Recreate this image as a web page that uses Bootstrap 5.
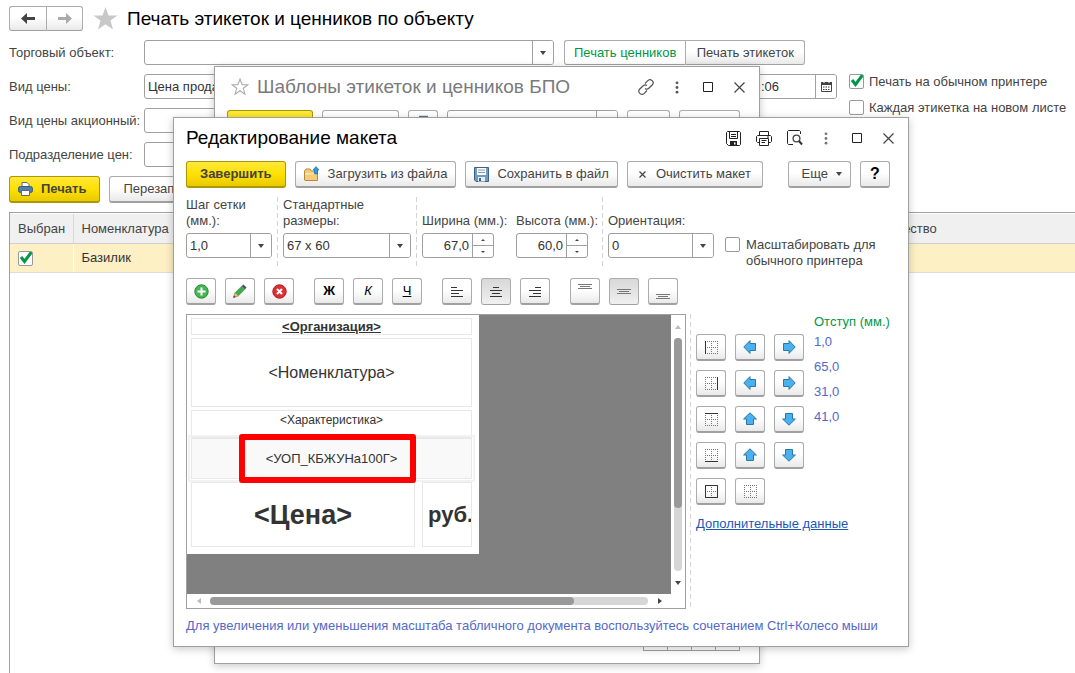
<!DOCTYPE html>
<html lang="ru">
<head>
<meta charset="utf-8">
<meta name="viewport" content="width=device-width, initial-scale=1">
<title>Печать этикеток и ценников по объекту</title>
<link href="https://cdn.jsdelivr.net/npm/bootstrap@5.3.0/dist/css/bootstrap.min.css" rel="stylesheet">
<style>
  :root { --edge:#a0a0a0; --ink:#444; --blue:#5468c8; --green:#009646; }
  html, body { height:100%; }
  body { font-family:"Liberation Sans", Arial, sans-serif; font-size:13px; line-height:16px; color:var(--ink); background:#fff; }
  svg { display:block; flex:none; }
  button, input { font:inherit; color:inherit; }
  .desk { position:relative; min-height:100vh; overflow:hidden; }
  .page-body { padding:6px 0 0 9px; gap:9px; min-height:100vh; }
  .page-title { font-size:19px; line-height:24px; color:#000; font-weight:400; margin:0; }
  .cap { width:135px; flex:none; }
  .gap-9 { gap:9px; } .gap-10 { gap:10px; } .gap-20 { gap:20px; }

  .ctl { height:27px; padding:0 13px; border:1px solid #acacac; border-bottom:2px solid #a0a0a0; border-radius:3px;
         background:linear-gradient(#fff 45%,#e9e9e9); color:var(--ink); display:flex; align-items:center; justify-content:center; white-space:nowrap; }
  .ctl-main { background:linear-gradient(#ffe93e,#ffe000 50%,#e8ca00); border-color:#ab9700; font-weight:700; }
  .ctl-sq { width:30px; padding:0; flex:none; }
  .ctl-on { background:linear-gradient(#d8d8d8,#f0f0f0); border-width:1px; }
  .ctl-low { height:25px; padding:0 9px; }
  .ctl-nav { width:37px; padding:0; }
  .ctl-wipe { padding:0 11px; }
  .pair .ctl { border-bottom-width:1px; }
  .pair .ctl:first-child { border-radius:3px 0 0 3px; border-right:0; }
  .pair .ctl:last-child { border-radius:0 3px 3px 0; }
  .pair .picked { background:#fff; color:var(--green); }
  .wide { min-width:120px; }

  .fld { display:flex; height:25px; border:1px solid var(--edge); border-radius:3px; background:#fff; overflow:hidden; flex:none; }
  .fld input { border:0; outline:0; padding:0 3px; min-width:0; flex:1; color:#333; background:none; }
  .fld > button { width:21px; flex:none; border:0; border-left:1px solid var(--edge); background:#fff; padding:0; display:flex; align-items:center; justify-content:center; }
  .w-kind { width:410px; } .w-date { width:80px; margin-left:203px; }
  .w-step { width:86px; } .w-size { width:128px; } .w-num { width:72px; } .w-turn { width:106px; }
  .spin { width:21px; flex:none; border-left:1px solid var(--edge); display:flex; flex-direction:column; }
  .spin button { flex:1; border:0; background:none; padding:0; display:flex; align-items:center; justify-content:center; }
  .spin button + button { border-top:1px solid var(--edge); }

  .tick { appearance:none; width:15px; height:15px; margin:0; border:1px solid #999; border-radius:2px; background:#fff; flex:none; }
  .tick:checked { background:#fff url("data:image/svg+xml,%3Csvg xmlns='http://www.w3.org/2000/svg' viewBox='0 0 15 15'%3E%3Cpath d='M3 6 6.500 10.500 13.500 1' fill='none' stroke='%23009646' stroke-width='3'/%3E%3C/svg%3E") center/15px no-repeat; }
  .tick-line { display:flex; gap:5px; margin-bottom:10px; }

  .goods { border-left:1px solid var(--edge); border-top:1px solid var(--edge); flex:1; }
  .goods table { width:100%; table-layout:fixed; border-collapse:collapse; }
  .goods th { height:30px; font-weight:400; background:#f0f0f0; border-bottom:1px solid #cfcfcf; border-top:1px solid #fff; padding:0 8px; }
  .goods td { height:29px; background:#fdf0c5; border-bottom:1px solid #ddd; border-top:1px solid #fff; padding:0 8px; color:#333; }
  .goods th + th { border-left:1px solid #d8d8d8; } .goods td + td { border-left:1px solid #fff; }
  .goods .c-pick { width:63px; } .goods .c-name { width:790px; }

  .win { position:absolute; background:#fff; border:1px solid var(--edge); box-shadow:0 2px 8px rgba(0,0,0,.22); }
  .win-list { left:214px; top:66px; width:546px; padding:8px 10px 12px 12px; }
  .win-edit { left:173px; top:117px; width:736px; padding:8px 10px 12px 12px; }
  .win-head { display:flex; align-items:center; margin-bottom:11px; }
  .win-tools { display:flex; gap:11px; }
  .win-title { font-size:19px; line-height:24px; margin:0; font-weight:400; color:#000; }
  .win-list .win-title { color:#7a7a7a; }
  .win-btn { border:0; background:none; padding:0; width:20px; height:20px; display:flex; align-items:center; justify-content:center; flex:none; }
  .b-pick { width:86px; } .b-new { width:77px; } .b-find { width:171px; } .b-clear { width:43px; } .b-more { width:61px; }
  .list-space { height:489px; }
  .page-keys { padding-right:9px; }
  .page-keys button { width:25px; height:25px; background:#fff; border:1px solid var(--edge); margin-left:-1px; padding:0; }

  .dash-l { width:1px; margin:0 5px; background:repeating-linear-gradient(#d4d4d4 0 5px,transparent 5px 8px); align-self:stretch; flex:none; }
  .dash-sheet { margin-left:4px; }
  .params { min-height:72px; margin:9px 0; }
  .params .cap-top { display:block; margin-bottom:4px; white-space:nowrap; }
  .col-wd { width:94px; } .col-ht { width:81px; }
  .scale-opt { display:flex; gap:6px; margin-left:11px; }

  .work { margin-top:9px; }
  .sheet { width:500px; border:1px solid var(--edge); display:grid; grid-template-columns:1fr 14px; grid-template-rows:279px 14px; flex:none; }
  .canvas { background:#808080; }
  .paper { background:#fff; width:292px; padding:3px 7px 4px 4px; position:relative; color:#333; }
  .slot { border:1px solid #e8e8e8; display:flex; align-items:center; justify-content:center; margin-bottom:3px; white-space:nowrap; overflow:hidden; }
  .s-org { height:17px; font-weight:700; text-decoration:underline; }
  .s-name { height:69px; font-size:16px; }
  .s-feat { height:28px; margin-bottom:0; font-size:12px; padding-bottom:9px; }
  .s-kbju { height:41px; background:#f9f9f9; outline:2px solid #f2f2f2; outline-offset:1px; }
  .s-price { height:65px; width:224px; font-size:27px; font-weight:700; line-height:32px; }
  .s-rub { height:65px; width:50px; font-size:22px; font-weight:700; justify-content:flex-start; padding-left:5px; line-height:32px; }
  .frame-mark { position:absolute; left:52px; top:119px; width:177px; height:49px; border:6px solid #f00; border-radius:3px; }
  .bar { display:flex; align-items:center; }
  .bar-y { flex-direction:column; }
  .bar button { border:0; background:none; padding:0; flex:none; width:23px; height:14px; display:flex; align-items:center; justify-content:center; }
  .bar-y button { width:14px; height:23px; }
  .rail { flex:1; background:#d6d6d6; border-radius:4px; }
  .bar-y .rail { width:8px; } .bar-x .rail { height:8px; }
  .grip { background:#999; border-radius:4px; }
  .bar-y .grip { height:73%; } .bar-x .grip { height:8px; width:83%; }

  .moves { display:grid; grid-template-columns:repeat(3,30px); gap:9px; padding-top:20px; }
  .insets { color:var(--blue); }
  .insets li { margin-bottom:9px; }
  .green { color:var(--green); }
  .more { color:#1a56b8; text-decoration:underline; display:inline-block; margin-top:11px; }
  .hint { color:var(--blue); margin:9px 0 0; }
</style>
</head>
<body>
<svg class="d-none" aria-hidden="true">
  <symbol id="dn" viewBox="0 0 6 4"><path d="M0 0H6L3 4z" fill="#444"/></symbol>
  <symbol id="dots" viewBox="0 0 4 14"><circle cx="2" cy="2" r="1.500"/><circle cx="2" cy="7" r="1.500"/><circle cx="2" cy="12" r="1.500"/></symbol>
  <symbol id="box" viewBox="0 0 10 10"><path d="M.5.5H9.500V9.500H.5z" fill="none" stroke="#222"/></symbol>
  <symbol id="x" viewBox="0 0 11 11"><path d="M.5.5 10.500 10.500M10.500.5.5 10.500" stroke="#444" stroke-width="1.200"/></symbol>
  <symbol id="arrow" viewBox="0 0 14 14"><path d="M.8 7 7 .6V3.500H12.500V10.500H7V13.400z" fill="#4ab0ee" stroke="#2b78a8"/></symbol>
  <symbol id="cells" viewBox="0 0 13 13"><path d="M.5 0V13M12.500 0V13M0 .5H13M0 12.500H13M6.500 0V13M0 6.500H13" fill="none" stroke="#777" stroke-dasharray="1 1"/></symbol>
</svg>

<div class="desk">
<main class="page-body d-flex flex-column">
  <header class="d-flex align-items-center">
    <div class="d-flex pair">
      <button class="ctl ctl-low ctl-nav" aria-label="Назад"><svg width="14" height="11" viewBox="0 0 14 11"><path d="M6 0V4H14V7H6V11L0 5.500z" fill="#444"/></svg></button>
      <button class="ctl ctl-low ctl-nav" aria-label="Вперед"><svg width="14" height="11" viewBox="0 0 14 11"><path d="M8 0V4H0V7H8V11L14 5.500z" fill="#aaa"/></svg></button>
    </div>
    <svg class="ms-2 me-2" width="28" height="24" viewBox="0 0 28 24"><path d="M14.500 0 17.500 8.500H26.500L19.500 13.500 22 22.500 14.500 17.200 7 22.500 9.500 13.500 2.500 8.500H11.500z" fill="#c8c8c8"/></svg>
    <h1 class="page-title">Печать этикеток и ценников по объекту</h1>
  </header>

  <div class="d-flex align-items-center">
    <label class="cap" for="obj">Торговый объект:</label>
    <div class="d-flex gap-10">
      <div class="fld w-kind"><input id="obj" type="text"><button aria-label="Выбрать объект"><svg width="6" height="4"><use href="#dn"/></svg></button></div>
      <div class="d-flex pair">
        <button class="ctl ctl-low wide picked">Печать ценников</button>
        <button class="ctl ctl-low wide">Печать этикеток</button>
      </div>
    </div>
  </div>

  <div class="d-flex">
    <div class="d-flex flex-column gap-9">
      <div class="d-flex align-items-center"><label class="cap" for="kind">Вид цены:</label><div class="fld w-kind"><input id="kind" type="text" value="Цена продажи"></div></div>
      <div class="d-flex align-items-center"><label class="cap" for="promo">Вид цены акционный:</label><div class="fld w-kind"><input id="promo" type="text"></div></div>
      <div class="d-flex align-items-center"><label class="cap" for="dept">Подразделение цен:</label><div class="fld w-kind"><input id="dept" type="text"></div></div>
    </div>
    <div class="fld w-date"><input type="text" value=":06" aria-label="Время"><button aria-label="Календарь"><svg width="11" height="11" viewBox="0 0 11 11"><path d="M.5 1.500H10.500V10.500H.5z" fill="none" stroke="#444"/><path d="M0 1H11V4H0z" fill="#444"/><path d="M3 0V2M8 0V2" stroke="#fff"/><path d="M2 6H9.500M2 8.500H9.500" stroke="#444" stroke-dasharray="1.500 1"/></svg></button></div>
    <div class="ms-2 ps-1">
      <label class="tick-line"><input class="tick" type="checkbox" checked>Печать на обычном принтере</label>
      <label class="tick-line"><input class="tick" type="checkbox">Каждая этикетка на новом листе</label>
    </div>
  </div>

  <div class="d-flex gap-9">
    <button class="ctl ctl-main ps-2"><svg class="me-2" width="15" height="14" viewBox="0 0 15 14"><path d="M4 5V.5H9L11 2.500V5" fill="#fff" stroke="#667"/><rect x=".5" y="4.500" width="14" height="6" rx="2" fill="#4d7fae" stroke="#345b80"/><path d="M3.500 8.500H11.500V13.500H3.500z" fill="#fff" stroke="#667"/></svg>Печать</button>
    <button class="ctl">Перезаполнить</button>
  </div>

  <div class="goods">
    <table>
      <thead><tr><th class="c-pick">Выбран</th><th class="c-name">Номенклатура</th><th class="border-start-0 ps-1">Количество</th></tr></thead>
      <tbody><tr><td><input class="tick d-block" type="checkbox" checked aria-label="Выбран"></td><td>Базилик</td><td></td></tr></tbody>
    </table>
  </div>
</main>

<section class="win win-list" aria-label="Шаблоны">
  <div class="win-head">
    <svg class="ms-1 me-2" width="18" height="18" viewBox="0 0 17 17"><path d="M8.500 1 10.500 6.300H16L11.600 9.700 13.200 15.300 8.500 12 3.800 15.300 5.400 9.700 1 6.300H6.500z" fill="none" stroke="#aaa"/></svg>
    <h2 class="win-title me-auto">Шаблоны этикеток и ценников БПО</h2>
    <div class="win-tools">
      <button class="win-btn" aria-label="Ссылка"><svg width="16" height="16" viewBox="0 0 16 16"><g fill="none" stroke="#555" stroke-width="1.200"><path d="M7 4.500 9.800 1.700A2.900 2.900 0 0 1 14.200 6L10.800 9.300A2.900 2.900 0 0 1 7 9.500"/><path d="M9 11.500 6.200 14.300A2.900 2.900 0 0 1 1.800 10L5.200 6.700A2.900 2.900 0 0 1 9 6.500"/></g></svg></button>
      <button class="win-btn" aria-label="Меню"><svg width="4" height="13" fill="#555"><use href="#dots"/></svg></button>
      <button class="win-btn" aria-label="Развернуть"><svg width="10" height="10"><use href="#box"/></svg></button>
      <button class="win-btn" aria-label="Закрыть"><svg width="11" height="11"><use href="#x"/></svg></button>
    </div>
  </div>
  <div class="d-flex gap-9">
    <button class="ctl ctl-main b-pick" aria-label="Выбрать"></button>
    <button class="ctl b-new" aria-label="Создать"></button>
    <button class="ctl ctl-sq" aria-label="Копировать"><svg width="9" height="16" viewBox="0 0 10 16"><path d="M0 0H10V16H0z" fill="#5b7390"/></svg></button>
    <div class="fld b-find"><input type="text" aria-label="Поиск"><button aria-label="Найти"></button></div>
    <button class="ctl b-clear" aria-label="Очистить"></button>
    <button class="ctl b-more" aria-label="Еще"></button>
  </div>
  <div class="list-space"></div>
  <div class="d-flex justify-content-end page-keys"><button aria-label="В начало"></button><button aria-label="Вверх"></button><button aria-label="Вниз"></button><button aria-label="В конец"></button></div>
</section>

<section class="win win-edit" aria-label="Редактирование макета">
  <div class="win-head">
    <h2 class="win-title me-auto">Редактирование макета</h2>
    <div class="win-tools">
      <button class="win-btn" aria-label="Сохранить"><svg width="15" height="15" viewBox="0 0 15 15"><path d="M.5 1.500L1.500.5H13.500L14.500 1.500V13.500L13.500 14.500H2.500L.5 12.500zM3.500 1V7.500H11.500V1M5 3.500H10M5 5.500H10" fill="none" stroke="#222"/><path d="M4 10H11V14.500H4z" fill="#222"/><path d="M8 11.500H9.500V13.500H8z" fill="#fff"/></svg></button>
      <button class="win-btn" aria-label="Печать"><svg width="16" height="15" viewBox="0 0 16 15"><path d="M3.500 4V.5H12.500V4M3 11.500H1.500L.5 10.500V5.500L1.500 4.500H14.500L15.500 5.500V10.500L14.500 11.500H13M3.500 7.500H12.500V14.500H3.500zM5.500 9.500H10.500M5.500 11.500H9M11 6H13" fill="none" stroke="#222"/></svg></button>
      <button class="win-btn" aria-label="Просмотр"><svg width="16" height="16" viewBox="0 0 16 16"><path d="M13.500 4V1.500L12.500.5H1.500L.5 1.500V13.500L1.500 14.500H6" fill="none" stroke="#222"/><circle cx="9.500" cy="8.500" r="3.400" fill="none" stroke="#444" stroke-width="1.300"/><path d="M12 11 15 14.500" stroke="#333" stroke-width="2"/></svg></button>
      <button class="win-btn" aria-label="Меню"><svg width="4" height="13" fill="#777"><use href="#dots"/></svg></button>
      <button class="win-btn" aria-label="Развернуть"><svg width="10" height="10"><use href="#box"/></svg></button>
      <button class="win-btn" aria-label="Закрыть"><svg width="11" height="11"><use href="#x"/></svg></button>
    </div>
  </div>

  <div class="d-flex gap-9 page-keys-none pe-2">
    <button class="ctl ctl-main">Завершить</button>
    <button class="ctl px-2"><svg class="me-2" width="16" height="16" viewBox="0 0 16 16"><path d="M.5 14V5L2 3H6L7.500 5H13.500V14.500H1z" fill="#f5cd78" stroke="#b98a35"/><path d="M1 8H13" stroke="#fff0c0"/><path d="M10.500 8V4H9L12 .5 15 4H13.500V8z" fill="#2f9be0" stroke="#1c6faa" stroke-width=".7"/></svg>Загрузить из файла</button>
    <button class="ctl px-2"><svg class="me-2" width="15" height="15" viewBox="0 0 15 15"><path d="M.5.5H14.500V14.500H2L.5 13z" fill="#6f9cc6" stroke="#3c6288"/><path d="M3 1H12V8H3z" fill="#fff"/><path d="M4 3H11M4 5.500H11" stroke="#89a"/><path d="M4 10H11V14.500H4z" fill="#e6edf5"/><path d="M5 11H7V14H5z" fill="#3c6288"/></svg>Сохранить в файл</button>
    <button class="ctl ctl-wipe gap-10"><svg width="7" height="7" viewBox="0 0 7 7"><path d="M.5.5 6.500 6.500M6.500.5.5 6.500" stroke="#444" stroke-width="1.200"/></svg>Очистить макет</button>
    <button class="ctl ms-auto pe-2">Еще <svg class="ms-2" width="6" height="4"><use href="#dn"/></svg></button>
    <button class="ctl ctl-sq fw-bold text-black fs-6">?</button>
  </div>

  <div class="d-flex params">
    <div class="w-step"><label class="cap-top" for="step">Шаг сетки<br>(мм.):</label><div class="fld"><input id="step" value="1,0"><button aria-label="Выбрать шаг"><svg width="6" height="4"><use href="#dn"/></svg></button></div></div>
    <div class="dash-l"></div>
    <div class="w-size"><label class="cap-top" for="size">Стандартные<br>размеры:</label><div class="fld"><input id="size" value="67 x 60"><button aria-label="Выбрать размер"><svg width="6" height="4"><use href="#dn"/></svg></button></div></div>
    <div class="dash-l"></div>
    <div class="pt-3 col-wd"><label class="cap-top" for="wd">Ширина (мм.):</label><div class="fld w-num"><input id="wd" class="text-end" value="67,0"><span class="spin"><button aria-label="Больше"><svg width="4" height="2"><path d="M2 0 4 2H0z" fill="#444"/></svg></button><button aria-label="Меньше"><svg width="4" height="2"><path d="M0 0H4L2 2z" fill="#444"/></svg></button></span></div></div>
    <div class="pt-3 col-ht"><label class="cap-top" for="ht">Высота (мм.):</label><div class="fld w-num"><input id="ht" class="text-end" value="60,0"><span class="spin"><button aria-label="Больше"><svg width="4" height="2"><path d="M2 0 4 2H0z" fill="#444"/></svg></button><button aria-label="Меньше"><svg width="4" height="2"><path d="M0 0H4L2 2z" fill="#444"/></svg></button></span></div></div>
    <div class="dash-l"></div>
    <div class="w-turn pt-3"><label class="cap-top" for="turn">Ориентация:</label><div class="fld"><input id="turn" value="0"><button aria-label="Выбрать ориентацию"><svg width="6" height="4"><use href="#dn"/></svg></button></div></div>
    <label class="scale-opt align-self-end"><input class="tick" type="checkbox"><span>Масштабировать для<br>обычного принтера</span></label>
  </div>

  <div class="d-flex gap-20">
    <div class="d-flex gap-9">
      <button class="ctl ctl-sq" aria-label="Добавить"><svg width="15" height="15" viewBox="0 0 15 15"><circle cx="7.500" cy="7.500" r="6.700" fill="#44b652" stroke="#278b36"/><path d="M7.500 3.500V11.500M3.500 7.500H11.500" stroke="#fff" stroke-width="2"/></svg></button>
      <button class="ctl ctl-sq" aria-label="Изменить"><svg width="14" height="14" viewBox="0 0 14 14"><path d="M.5 13.500 2 8.500 5.500 12z" fill="#f3c277" stroke="#8a6a3a" stroke-width=".6"/><path d="M2 8.500 8.500 2 12 5.500 5.500 12z" fill="#43a84c"/><path d="M8.500 2 10.500 .5 13.500 3.500 12 5.500z" fill="#4a5568"/><path d="M.3 13.700 1 11.500 2.500 13z" fill="#333"/></svg></button>
      <button class="ctl ctl-sq" aria-label="Удалить"><svg width="15" height="15" viewBox="0 0 15 15"><circle cx="7.500" cy="7.500" r="6.700" fill="#dd3036" stroke="#b01a22"/><path d="M5 5 10 10M10 5 5 10" stroke="#fff" stroke-width="2"/></svg></button>
    </div>
    <div class="d-flex gap-9">
      <button class="ctl ctl-sq fw-bold text-black">Ж</button>
      <button class="ctl ctl-sq fst-italic text-black">К</button>
      <button class="ctl ctl-sq text-decoration-underline text-black">Ч</button>
    </div>
    <div class="d-flex gap-9">
      <button class="ctl ctl-sq" aria-label="По левому краю"><svg width="12" height="11" viewBox="0 0 12 11"><path d="M0 1.500H6M0 4.500H12M0 7.500H8M0 10.500H12" stroke="#333"/></svg></button>
      <button class="ctl ctl-sq ctl-on" aria-label="По центру"><svg width="12" height="11" viewBox="0 0 12 11"><path d="M3 1.500H9M0 4.500H12M2 7.500H10M0 10.500H12" stroke="#333"/></svg></button>
      <button class="ctl ctl-sq" aria-label="По правому краю"><svg width="12" height="11" viewBox="0 0 12 11"><path d="M6 1.500H12M0 4.500H12M4 7.500H12M0 10.500H12" stroke="#333"/></svg></button>
    </div>
    <div class="d-flex gap-9">
      <button class="ctl ctl-sq" aria-label="По верху"><svg width="14" height="17" viewBox="0 0 14 17"><path d="M0 1.500H14M2 3.500H12M0 5.500H14" stroke="#777"/></svg></button>
      <button class="ctl ctl-sq ctl-on" aria-label="По середине"><svg width="14" height="17" viewBox="0 0 14 17"><path d="M0 6.500H14M2 8.500H12M0 10.500H14" stroke="#777"/></svg></button>
      <button class="ctl ctl-sq" aria-label="По низу"><svg width="14" height="17" viewBox="0 0 14 17"><path d="M0 11.500H14M2 13.500H12M0 15.500H14" stroke="#777"/></svg></button>
    </div>
  </div>

  <div class="d-flex work">
    <div class="sheet">
      <div class="canvas">
        <div class="paper">
          <div class="slot s-org">&lt;Организация&gt;</div>
          <div class="slot s-name">&lt;Номенклатура&gt;</div>
          <div class="slot s-feat">&lt;Характеристика&gt;</div>
          <div class="slot s-kbju">&lt;УОП_КБЖУНа100Г&gt;</div>
          <div class="d-flex justify-content-between">
            <div class="slot s-price">&lt;Цена&gt;</div>
            <div class="slot s-rub">руб.</div>
          </div>
          <div class="frame-mark"></div>
        </div>
      </div>
      <div class="bar bar-y">
        <button aria-label="Вверх"><svg width="6" height="4"><path d="M3 0 6 4H0z" fill="#bbb"/></svg></button>
        <div class="rail"><div class="grip"></div></div>
        <button aria-label="Вниз"><svg width="6" height="4"><use href="#dn"/></svg></button>
      </div>
      <div class="bar bar-x">
        <button aria-label="Влево"><svg width="4" height="6"><path d="M4 0V6L0 3z" fill="#bbb"/></svg></button>
        <div class="rail"><div class="grip"></div></div>
        <button aria-label="Вправо"><svg width="4" height="6"><path d="M0 0V6L4 3z" fill="#444"/></svg></button>
      </div>
    </div>
    <div class="dash-l dash-sheet"></div>
    <div>
      <div class="d-flex gap-10">
        <div class="moves">
          <button class="ctl ctl-sq" aria-label="Левая граница"><svg width="13" height="13"><use href="#cells"/><path d="M.5 0V13" stroke="#333"/></svg></button>
          <button class="ctl ctl-sq" aria-label="Левая влево"><svg width="14" height="14"><use href="#arrow"/></svg></button>
          <button class="ctl ctl-sq" aria-label="Левая вправо"><svg width="14" height="14" viewBox="0 0 14 14"><use href="#arrow" width="14" height="14" transform="rotate(180 7 7)"/></svg></button>
          <button class="ctl ctl-sq" aria-label="Правая граница"><svg width="13" height="13"><use href="#cells"/><path d="M12.500 0V13" stroke="#333"/></svg></button>
          <button class="ctl ctl-sq" aria-label="Правая влево"><svg width="14" height="14"><use href="#arrow"/></svg></button>
          <button class="ctl ctl-sq" aria-label="Правая вправо"><svg width="14" height="14" viewBox="0 0 14 14"><use href="#arrow" width="14" height="14" transform="rotate(180 7 7)"/></svg></button>
          <button class="ctl ctl-sq" aria-label="Верхняя граница"><svg width="13" height="13"><use href="#cells"/><path d="M0 .5H13" stroke="#333"/></svg></button>
          <button class="ctl ctl-sq" aria-label="Верхняя вверх"><svg width="14" height="14" viewBox="0 0 14 14"><use href="#arrow" width="14" height="14" transform="rotate(90 7 7)"/></svg></button>
          <button class="ctl ctl-sq" aria-label="Верхняя вниз"><svg width="14" height="14" viewBox="0 0 14 14"><use href="#arrow" width="14" height="14" transform="rotate(-90 7 7)"/></svg></button>
          <button class="ctl ctl-sq" aria-label="Нижняя граница"><svg width="13" height="13"><use href="#cells"/><path d="M0 12.500H13" stroke="#333"/></svg></button>
          <button class="ctl ctl-sq" aria-label="Нижняя вверх"><svg width="14" height="14" viewBox="0 0 14 14"><use href="#arrow" width="14" height="14" transform="rotate(90 7 7)"/></svg></button>
          <button class="ctl ctl-sq" aria-label="Нижняя вниз"><svg width="14" height="14" viewBox="0 0 14 14"><use href="#arrow" width="14" height="14" transform="rotate(-90 7 7)"/></svg></button>
          <button class="ctl ctl-sq" aria-label="Все границы"><svg width="13" height="13"><use href="#cells"/><path d="M.5 .5H12.500V12.500H.5z" fill="none" stroke="#333"/></svg></button>
          <button class="ctl ctl-sq" aria-label="Без границ"><svg width="13" height="13"><use href="#cells"/></svg></button>
        </div>
        <div>
          <div class="green mb-1">Отступ (мм.)</div>
          <ul class="list-unstyled insets mb-0"><li>1,0</li><li>65,0</li><li>31,0</li><li>41,0</li></ul>
        </div>
      </div>
      <a class="more" href="#">Дополнительные данные</a>
    </div>
  </div>
  <p class="hint">Для увеличения или уменьшения масштаба табличного документа воспользуйтесь сочетанием Ctrl+Колесо мыши</p>
</section>
</div>
<script src="https://cdn.jsdelivr.net/npm/bootstrap@5.3.0/dist/js/bootstrap.bundle.min.js"></script>
</body>
</html>
